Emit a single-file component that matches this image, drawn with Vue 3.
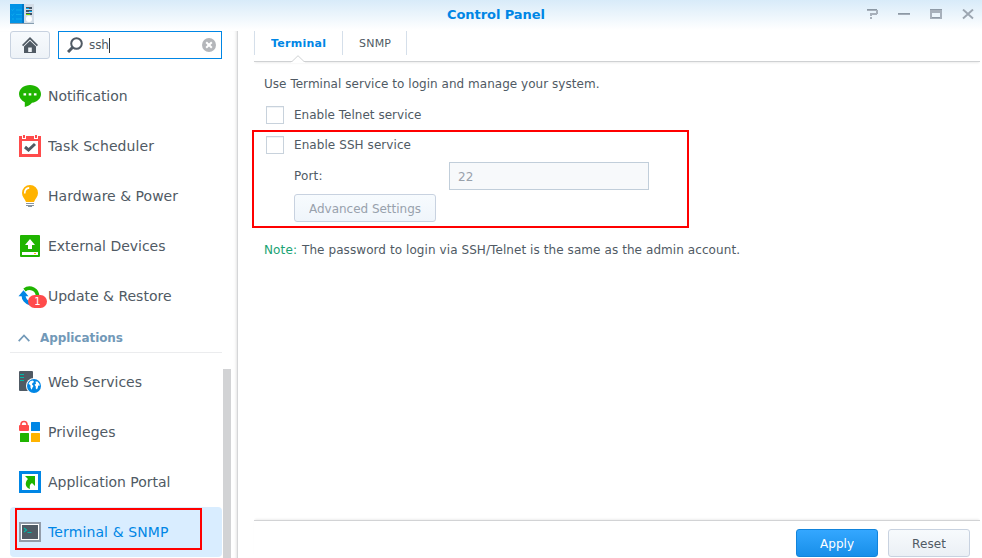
<script setup>
import { ref } from 'vue'

const systemItems = [
  { id: 'notification', label: 'Notification', width: 79.500 },
  { id: 'task', label: 'Task Scheduler', width: 106 },
  { id: 'power', label: 'Hardware & Power', width: 130 },
  { id: 'external', label: 'External Devices', width: 117.500 },
  { id: 'update', label: 'Update & Restore', width: 123.500, badge: 1 },
]
const appItems = [
  { id: 'web', label: 'Web Services', width: 94 },
  { id: 'privileges', label: 'Privileges', width: 67.500 },
  { id: 'portal', label: 'Application Portal', width: 122.500 },
  { id: 'terminal', label: 'Terminal & SNMP', width: 120.500 },
]
const groups = [
  { id: 'system', items: systemItems },
  { id: 'apps', title: 'Applications', items: appItems },
]
const selected = ref('terminal')
</script>

<template>
  <div class="window">
    <header class="titlebar">
      <svg class="logo" width="25" height="21" viewBox="0 0 25 21">
        <path d="M14 0h10v20H14z" fill="#d3dde7" />
        <path d="M0 0h12v20H0z" fill="#0093e6" />
        <path d="M12 0h2v20h-2z" fill="#0078c8" />
        <path d="M0 19h14v1H0zM14 19h10v1H14z" fill="#879eb0" />
        <path d="M1.500 5.500l1 1 1.500-2M1.500 10.500l1 1 1.500-2M6 6h6M6 10.500h6M2 15h2M6 15h6" fill="none" stroke="#10b0ef" stroke-width=".8" />
        <path d="M16 3h6v2h-6zM16 6h6v2h-6zM16 9h6v2h-6z" fill="#435363" />
        <path d="M16 4h3v1h-3zM19 7h3v1h-3z" fill="#00aaf0" />
        <path d="M16 10h4v1h-4z" fill="#78dc00" />
        <circle cx="19" cy="15" r="3" fill="#fff" />
      </svg>
      <h1 class="title"><svg class="label" width="98" height="18"><text x="0" y="13" textLength="98">Control Panel</text></svg></h1>
      <div class="controls">
        <svg width="12" height="11" viewBox="0 0 12 11" shape-rendering="crispEdges"><path d="M1 0h10v1h1v4h-1v1H6v1H4V4h6V2H1zM4 8h2v2H4z" fill="#a7b0bb" /><path d="M1 0h10v1H1z" fill="#8c99a5" /></svg>
        <svg width="12" height="11" viewBox="0 0 12 11"><path d="M0 4h12v2H0z" fill="#a4adb8" /><path d="M0 4h12v1H0z" fill="#8c99a5" /></svg>
        <svg width="12" height="11" viewBox="0 0 12 11"><path fill-rule="evenodd" d="M0 0h12v10H0zM2 4v4h8V4z" fill="#a7b0bb" /><path d="M0 0h12v1H0zM2 8h8v1H2z" fill="#8e9aa6" /></svg>
        <svg width="12" height="11" viewBox="0 0 12 11"><path d="M1 .5l10 9M11 .5l-10 9" fill="none" stroke="#9ca6b1" stroke-width="1.900" /></svg>
      </div>
    </header>

    <div class="body">
      <aside class="sidebar">
        <div class="tools">
          <button class="home" aria-label="Home">
            <svg width="16" height="16" viewBox="0 0 16 16">
              <path d="M0 8L8 0l8 8-1.200 1.200L8 2.600 1.200 9.200z" fill="#505a64" />
              <path fill-rule="evenodd" d="M2 9.600l6-5.800 6 5.800V16H2zM6.200 10.500V15h3.600v-4.500z" fill="#505a64" />
            </svg>
          </button>
          <div class="search">
            <svg class="glass" width="16" height="16" viewBox="0 0 16 16">
              <circle cx="9.500" cy="6.500" r="5.300" fill="none" stroke="#505a64" stroke-width="2" />
              <path d="M5.500 10.500L1 15" stroke="#505a64" stroke-width="3" />
            </svg>
            <span class="query">ssh</span>
            <svg class="clear" width="14" height="14" viewBox="0 0 14 14">
              <circle cx="7" cy="7" r="7" fill="#b4b6ba" />
              <path d="M4.200 4.200l5.600 5.600M9.800 4.200L4.200 9.800" stroke="#fff" stroke-width="2" />
            </svg>
          </div>
        </div>

        <nav class="nav">
          <template v-for="group in groups" :key="group.id">
            <div v-if="group.title" class="group-title">
              <svg class="chevron" width="12" height="8" viewBox="0 0 12 8"><path d="M.7 7.200L6 1.500l5.300 5.700" fill="none" stroke="#7299b8" stroke-width="1.700" /></svg>
              <svg class="label" width="84" height="18"><text x="0" y="13" textLength="83">{{ group.title }}</text></svg>
            </div>
            <div
              v-for="item in group.items"
              :key="item.id"
              class="item"
              :class="{ active: item.id === selected }"
              @click="selected = item.id"
            >
              <span class="icon">
                <svg v-if="item.id === 'notification'" width="24" height="24" viewBox="0 0 24 24">
                  <path d="M12 1C5.800 1 1 4.900 1 10c0 3.600 2.300 6.500 5.800 8.300V23c3-.6 5.500-2 7.200-4.200C19 18 23 14.700 23 10c0-5.100-4.800-9-11-9z" fill="#1fb400" />
                  <path d="M5.500 9.200h2.600v2.300H5.500zM10.700 9.200h2.600v2.300h-2.600zM15.900 9.200h2.600v2.300h-2.600z" fill="#fff" />
                </svg>
                <svg v-else-if="item.id === 'task'" width="24" height="24" viewBox="0 0 24 24">
                  <path fill-rule="evenodd" d="M1 2h22v21H1zM4 7v13h16V7z" fill="#ff4b4b" />
                  <path d="M4 0h4v5H4zM16 0h4v5h-4z" fill="#fff" />
                  <path d="M5 1h2v3H5zM17 1h2v3h-2z" fill="#ff4b4b" />
                  <path d="M7 13l3.500 3L17 10" fill="none" stroke="#505a64" stroke-width="3" />
                </svg>
                <svg v-else-if="item.id === 'power'" width="24" height="24" viewBox="0 0 24 24">
                  <path d="M12 1a8 8 0 0 0-8 8c0 3.500 2.500 5.500 4 9h8c1.500-3.500 4-5.500 4-9a8 8 0 0 0-8-8z" fill="#ffb300" />
                  <path d="M6.700 9.500c0-3 1.500-5.300 4.500-5.600" fill="none" stroke="#fff" stroke-width="1.600" />
                  <path d="M8 19.500h8M8 21.500h8M10 22.500h4" stroke="#8995a1" />
                </svg>
                <svg v-else-if="item.id === 'external'" width="24" height="24" viewBox="0 0 24 24">
                  <rect x="2" y="1" width="20" height="22" rx="1" fill="#1fb400" />
                  <path d="M12 5l5 6h-3v4h-4v-4H7z" fill="#fff" />
                  <path d="M4 18h16v3H4z" fill="#fff" /><path d="M16 19h2v1h-2z" fill="#ffb300" />
                </svg>
                <svg v-else-if="item.id === 'update'" width="24" height="24" viewBox="0 0 24 24">
                  <path d="M6.500 6A8 8 0 0 1 19.500 13" fill="none" stroke="#1fb400" stroke-width="3.600" />
                  <path d="M5.500 11c0 4 2.500 7.500 7 8.500" fill="none" stroke="#0086e5" stroke-width="4" />
                  <path d="M.5 12.200l5-6 5 6z" fill="#0086e5" />
                </svg>
                <svg v-else-if="item.id === 'web'" width="24" height="24" viewBox="0 0 24 24">
                  <rect x="1" y="1" width="14" height="20" rx="1" fill="#505a64" />
                  <path d="M2 4.500h4M2 7.500h4M2 10.500h4" stroke="#00b9aa" />
                  <circle cx="16" cy="16" r="8" fill="#fff" /><circle cx="16" cy="16" r="7" fill="#0086e5" />
                  <path d="M10.500 13.500l2-2.500 2.500-.5 1 1.500-1.500 1-.5 1.500 1.500 1.500-1 1.500-.8 2.300-1.200-2v-2.300zM17.500 11.500h2l2 2.500v2l-1.500-.5v1.500l-1 2.500-1.200-1v-2l-1.300-1.800 1.500-1z" fill="#fff" />
                </svg>
                <svg v-else-if="item.id === 'privileges'" width="24" height="24" viewBox="0 0 24 24">
                  <path d="M3 6V4.500a3 3 0 0 1 6 0V6" fill="none" stroke="#ff4b4b" stroke-width="1.600" />
                  <rect x="1" y="5" width="10" height="6" rx="1" fill="#ff4b4b" />
                  <rect x="13" y="2" width="9" height="9" rx=".5" fill="#0086e5" />
                  <rect x="2" y="13" width="9" height="9" rx=".5" fill="#1fb400" />
                  <rect x="13" y="13" width="9" height="9" rx=".5" fill="#ffb300" />
                </svg>
                <svg v-else-if="item.id === 'portal'" width="24" height="24" viewBox="0 0 24 24">
                  <path fill-rule="evenodd" d="M1 1h22v22H1zM4 4v16h16V4z" fill="#0086e5" />
                  <path d="M7 6h10v10l-3-3c-2 1.200-2.700 3-2 6-5-1.500-5.500-6.500-2-10z" fill="#1fb400" />
                </svg>
                <svg v-else width="24" height="24" viewBox="0 0 24 24">
                  <path d="M1 2h22v20H1z" fill="#929ca9" /><path d="M3 4h18v16H3z" fill="#fff" /><path d="M4 5h16v14H4z" fill="#505a64" />
                  <path d="M6 8l2.500 2L6 12M9.500 12.500h4" fill="none" stroke="#00b9aa" stroke-width="1.200" />
                </svg>
                <span v-if="item.badge" class="badge">{{ item.badge }}</span>
              </span>
              <svg class="label" width="170" height="22"><text x="0" y="16" :textLength="item.width">{{ item.label }}</text></svg>
            </div>
          </template>
          <span class="scrollbar"></span>
          <span class="mark mark-terminal"></span>
        </nav>
      </aside>

      <main class="content">
        <div class="tabs">
          <div class="tab active">
            <svg class="label" width="55" height="18"><text x="0" y="13" textLength="55">Terminal</text></svg>
            <svg class="notch" width="14" height="8" viewBox="0 0 14 8"><path d="M0 7.500L7 .7l7 6.800V8H0z" fill="#fff" /><path d="M0 6.500h1L7 .7l6 5.800h1" fill="none" stroke="#cfd1d3" /></svg>
          </div>
          <div class="tab"><svg class="label" width="32" height="18"><text x="0" y="13" textLength="32">SNMP</text></svg></div>
        </div>

        <section class="form">
          <p class="row intro"><svg class="label" width="340" height="18"><text x="0" y="13" textLength="335.500">Use Terminal service to login and manage your system.</text></svg></p>
          <label class="row check"><span class="box"></span><svg class="label" width="130" height="18"><text x="0" y="13" textLength="127.500">Enable Telnet service</text></svg></label>
          <label class="row check"><span class="box"></span><svg class="label" width="130" height="18"><text x="0" y="13" textLength="117">Enable SSH service</text></svg></label>
          <div class="row port"><svg class="label" width="155" height="18"><text x="0" y="13" textLength="28.500">Port:</text></svg><span class="field">22</span></div>
          <button class="button advanced" disabled><svg class="label" width="113" height="18"><text x="0" y="13" textLength="112">Advanced Settings</text></svg></button>
          <p class="row note"><svg class="label" width="480" height="18"><text class="key" x="0" y="13" textLength="33">Note:</text><text x="38" y="13" textLength="438">The password to login via SSH/Telnet is the same as the admin account.</text></svg></p>
          <span class="mark mark-ssh"></span>
        </section>

        <footer class="footer">
          <button class="button primary"><svg class="label" width="34" height="18"><text x="0" y="13" textLength="34">Apply</text></svg></button>
          <button class="button"><svg class="label" width="34" height="18"><text x="0" y="13" textLength="34">Reset</text></svg></button>
        </footer>
      </main>
    </div>
  </div>
</template>

<style>
body { margin: 0; background: #fff; }
</style>

<style scoped>
* { box-sizing: border-box; }
svg { display: block; flex: none; }
.window {
  width: 982px; height: 558px; overflow: hidden;
  display: flex; flex-direction: column;
  font-family: Verdana, "DejaVu Sans", sans-serif; font-size: 12px; color: #505a64;
  background: linear-gradient(#d8ebf9, #fff 30px);
}
.label text { fill: currentColor; white-space: pre; }
.titlebar { height: 31px; flex: none; display: grid; grid-template-columns: 1fr auto 1fr; align-items: start; padding: 4px 8px 0 10px; }
.title { margin: 2px 0 0; font-size: 13px; color: #0086e5; font-weight: bold; padding-left: 7px; }
.controls { display: flex; gap: 20px; justify-content: flex-end; padding-top: 5px; }
.body { flex: 1; display: flex; min-height: 0; }
.sidebar { width: 238px; flex: none; border-right: 1px solid #d5d6d8; box-shadow: inset -3px 0 3px -2px #e4e4e4; display: flex; flex-direction: column; }
.tools { display: flex; gap: 8px; padding-left: 10px; flex: none; }
button { font: inherit; }
.home { width: 40px; height: 28px; padding: 0; display: grid; place-items: center; border: 1px solid #c8d2e0; border-radius: 3px; background: linear-gradient(#f7fafd, #edf2f7); }
.search { width: 164px; height: 28px; border: 1px solid #0086e5; background: #fff; display: flex; align-items: center; padding: 0 5px 0 8px; }
.query { margin-left: 6px; border-right: 1px solid #333; line-height: 15px; height: 15px; letter-spacing: -.1px; }
.clear { margin-left: auto; }
.nav { position: relative; flex: 1; padding: 12px 16px 0 10px; }
.item { height: 50px; display: flex; align-items: center; gap: 6px; padding-left: 8px; border-radius: 4px; width: 212px; font-size: 14px; cursor: pointer; }
.item.active { background: #d9edff; color: #0086e5; }
.icon { position: relative; width: 24px; height: 24px; }
.badge { position: absolute; left: 10px; top: 11px; width: 19px; height: 13px; border-radius: 7px; background: #ff4b4b; color: #fff; font-size: 10px; line-height: 13px; text-align: center; }
.group-title { width: 212px; height: 32px; margin-bottom: 4px; border-bottom: 1px solid #ebecee; display: flex; align-items: center; gap: 10px; padding: 3px 0 0 8px; font-size: 12px; font-weight: bold; color: #7299b8; }
.scrollbar { position: absolute; left: 223px; top: 310px; bottom: 0; width: 8px; background: #d2d3d5; }
.mark { position: absolute; border: 2px solid #f00; pointer-events: none; }
.mark-terminal { left: 15px; top: 449px; width: 187px; height: 42px; }
.content { flex: 1; padding: 0 2px 0 16px; display: flex; flex-direction: column; }
.tabs { height: 31px; flex: none; display: flex; align-items: flex-start; border-bottom: 1px solid #cfd1d3; box-shadow: 0 2px 2px -1px #ececec; }
.tab { position: relative; height: 24px; display: flex; align-items: center; padding: 0 15px 0 16px; border-right: 1px solid #d5dfea; font-size: 11px; }
.tab.active { border-left: 1px solid #d5dfea; font-weight: bold; color: #0086e5; width: 89px; }
.notch { position: absolute; left: 36px; top: 24px; }
.form { position: relative; flex: 1; padding: 11px 0 0 10px; }
.row { margin: 0; display: flex; align-items: center; }
.intro { height: 22px; }
.check { height: 30px; gap: 10px; padding-left: 2px; }
.check:nth-of-type(1) { margin-top: 5px; }
.box { width: 18px; height: 18px; border: 1px solid #c8d2dc; background: #fff; box-shadow: inset 0 1px #f0f3f6; }
.port { height: 32px; padding-left: 30px; }
.field { width: 200px; height: 28px; border: 1px solid #c1ceda; background: #f7f9fb; color: #99a1ab; padding-left: 8px; line-height: 28px; }
.button { width: 82px; height: 28px; padding: 1px 0 0; display: flex; align-items: center; justify-content: center; border: 1px solid #c8d2e0; border-radius: 3px; background: linear-gradient(#f7fafd, #ebf0f5); color: #505a64; }
.advanced { width: 142px; margin: 2px 0 0 30px; background: linear-gradient(#f7fbfe, #eff5fb); color: #98a1ac; }
.note { margin-top: 18px; height: 20px; }
.key { fill: #1aa373 !important; }
.mark-ssh { left: -2px; top: 68px; width: 437px; height: 98px; }
.footer { height: 38px; flex: none; border-top: 1px solid #d2d3d5; box-shadow: 0 -2px 2px -1px #eee; display: flex; justify-content: flex-end; gap: 10px; padding: 8px 10px 0 0; }
.button.primary { color: #fff; border-color: #1184dc; background: linear-gradient(#34a7ff, #188fe9); }
</style>
